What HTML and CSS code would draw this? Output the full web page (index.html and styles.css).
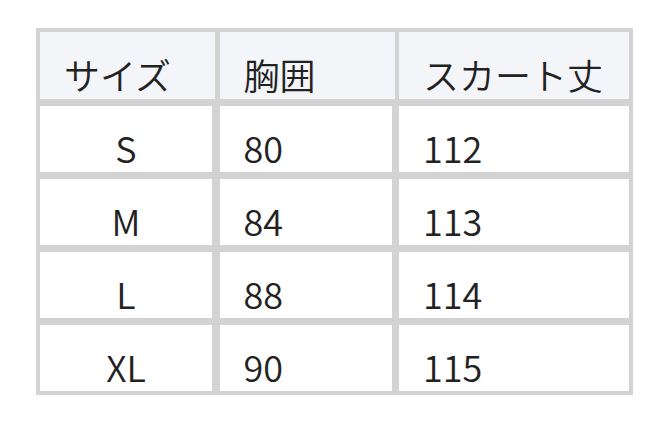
FILE: index.html
```html
<!DOCTYPE html>
<html lang="ja">
<head>
<meta charset="utf-8">
<link rel="stylesheet" href="styles.css">
</head>
<body>
<div class="size-table">
  <div class="cell head">サイズ</div>
  <div class="cell head">胸囲</div>
  <div class="cell head">スカート丈</div>

  <div class="cell body center">S</div>
  <div class="cell body">80</div>
  <div class="cell body last">112</div>

  <div class="cell body center">M</div>
  <div class="cell body">84</div>
  <div class="cell body last">113</div>

  <div class="cell body center">L</div>
  <div class="cell body">88</div>
  <div class="cell body last">114</div>

  <div class="cell body center">XL</div>
  <div class="cell body">90</div>
  <div class="cell body last">115</div>
</div>
</body>
</html>
```
FILE: styles.css
```css
html, body {
  margin: 0;
  padding: 0;
  background: #ffffff;
}

body {
  font-family: "Noto Sans CJK JP", "Noto Sans", sans-serif;
  color: #222222;
}

.size-table {
  margin: 28px 0 0 36px;
  width: 597px;
  box-sizing: border-box;
  padding: 4px;
  background: #d3d3d3;
  display: grid;
  grid-template-columns: 175px 175px 230px;
  grid-template-rows: 67px 66px 66px 66px 66px;
  column-gap: 4.5px;
  row-gap: 7px;
}

.cell {
  box-sizing: border-box;
  display: flex;
  align-items: flex-end;
  padding: 0 0 1px 24px;
  font-size: 36px;
  font-weight: 350;
  line-height: 48px;
}

.head {
  background: #f4f5f9;
}

.body {
  background: #ffffff;
  border-right: 3px solid #d3d3d3;
}

.body.last {
  border-right: 0;
}

.center {
  justify-content: center;
  padding-left: 0;
}
```
